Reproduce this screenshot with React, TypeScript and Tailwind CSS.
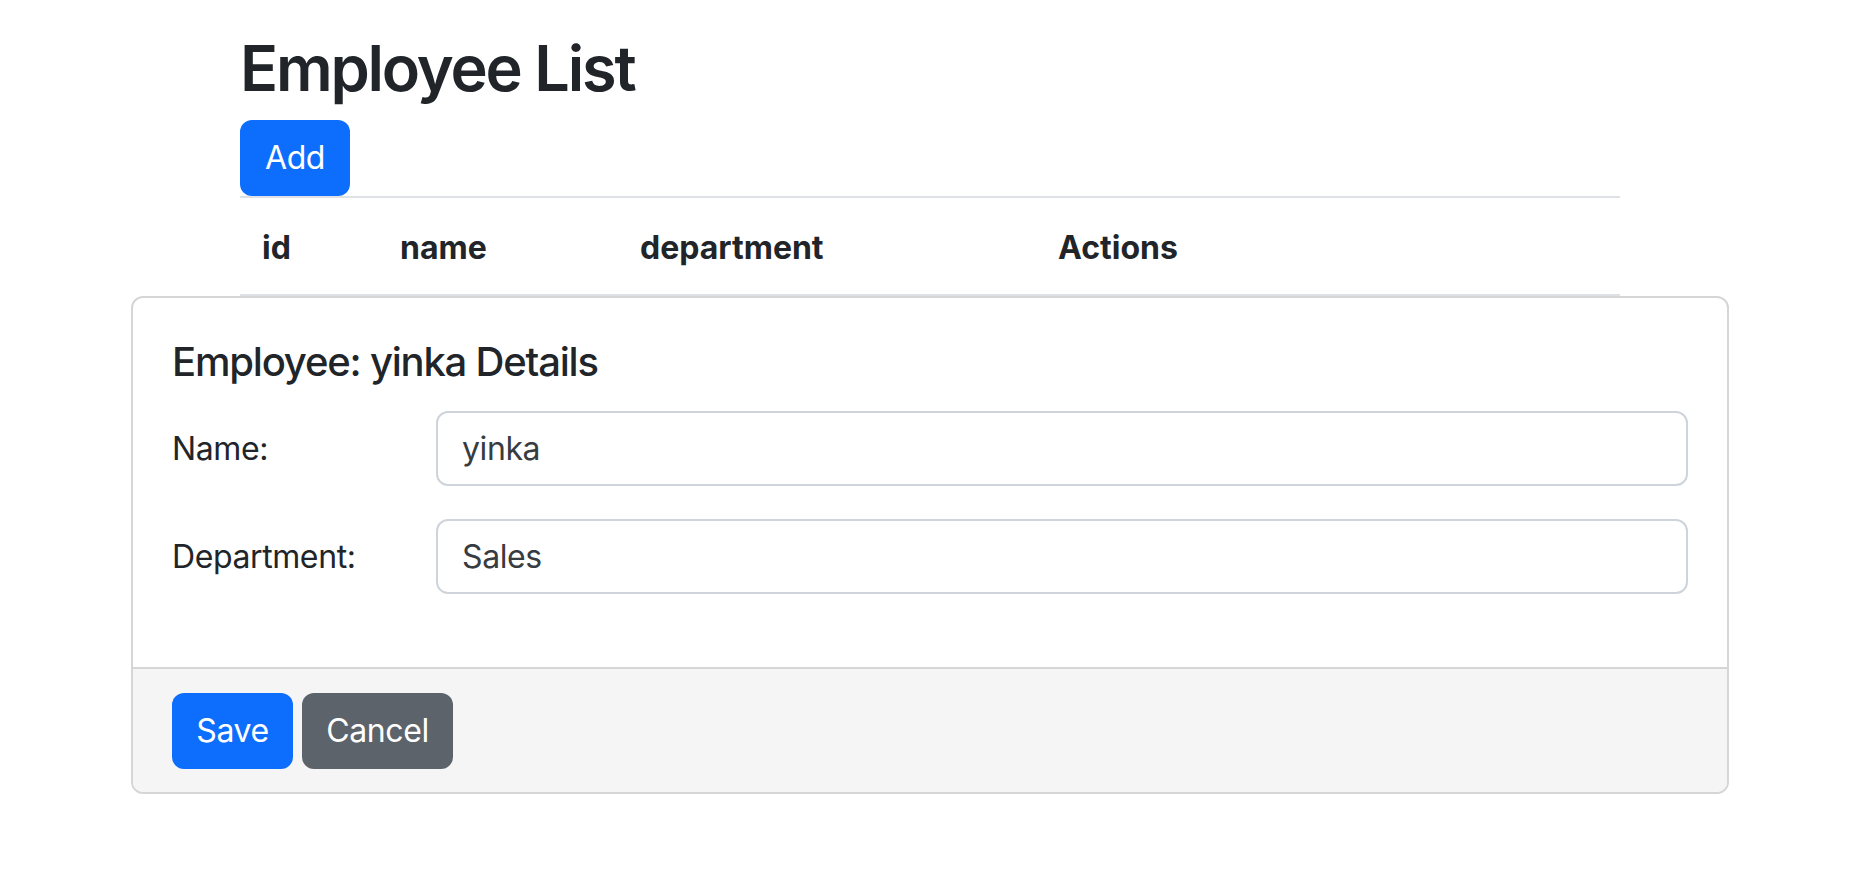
import { useState } from "react";

const columns = [
  { key: "id", label: "id" },
  { key: "name", label: "name" },
  { key: "department", label: "department" },
  { key: "actions", label: "Actions" },
];

export default function App() {
  const [name, setName] = useState("yinka");
  const [department, setDepartment] = useState("Sales");

  return (
    <div className="min-h-screen bg-white text-[#212529] font-['Inter','Liberation_Sans',sans-serif]">
      <div className="ml-[240px] w-[1380px]">
        <h1 className="mt-[30px] mb-[14px] h-[76px] text-[63px] leading-[76px] font-semibold tracking-[-2.2px]">
          Employee List
        </h1>
        <button className="flex h-[76px] w-[110px] items-center justify-center rounded-[12px] bg-[#0d6efd] text-[32px] leading-[48px] tracking-[-0.4px] text-white">
          Add
        </button>
        <div className="grid grid-cols-[138px_240px_418px_1fr] border-t-2 border-b-[3px] border-[#dee2e6] pl-[22px] pt-[26px] pb-[22px] text-[32px] leading-[48px] font-bold">
          {columns.map(c => (
            <div key={c.key}>{c.label}</div>
          ))}
        </div>
      </div>

      <div className="-mt-[1px] ml-[131px] w-[1598px] overflow-hidden rounded-[12px] border-2 border-[#d6d6d6]">
        <div className="px-[39px] pt-[40px] pb-[73px]">
          <h4 className="mb-[25px] text-[40px] leading-[48px] font-medium tracking-[-1.2px]">Employee: {name} Details</h4>
          <div className="flex flex-col gap-[33px]">
            <Row label="Name:" value={name} onChange={setName} />
            <Row label="Department:" value={department} onChange={setDepartment} />
          </div>
        </div>
        <div className="flex gap-[9px] border-t-2 border-[#d6d6d6] bg-[#f5f5f5] pl-[39px] pt-[24px] pb-[23px]">
          <button className="flex h-[76px] w-[121px] items-center justify-center rounded-[12px] bg-[#0d6efd] text-[32px] leading-[48px] tracking-[-0.4px] text-white">
            Save
          </button>
          <button className="flex h-[76px] w-[151px] items-center justify-center rounded-[12px] bg-[#5c636a] text-[32px] leading-[48px] tracking-[-0.4px] text-white">
            Cancel
          </button>
        </div>
      </div>
    </div>
  );
}

function Row({ label, value, onChange }: { label: string; value: string; onChange: (v: string) => void }) {
  return (
    <div className="flex items-center">
      <label className="w-[264px] shrink-0 text-[32px] leading-[48px] tracking-[-0.4px]">{label}</label>
      <input
        type="text"
        value={value}
        onChange={e => onChange(e.target.value)}
        className="h-[75px] flex-1 rounded-[12px] border-2 border-[#ced4da] bg-white px-[24px] text-[32px] tracking-[-0.4px] text-[#373c41] outline-none"
      />
    </div>
  );
}
